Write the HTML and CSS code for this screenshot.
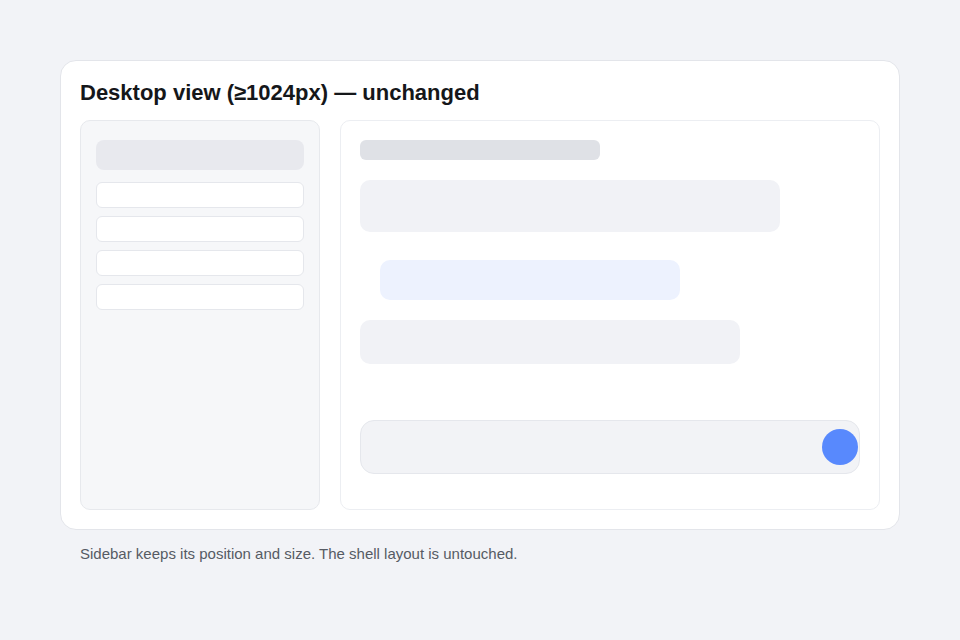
FILE: index.html
```html
<!DOCTYPE html>
<html lang="en">
<head>
<meta charset="utf-8">
<title>Desktop view</title>
<link rel="stylesheet" href="styles.css">
</head>
<body>
  <section class="panel">
    <h2 class="panel-title">Desktop view (≥1024px) — unchanged</h2>
    <div class="shell">
      <aside class="sidebar">
        <div class="sidebar-head"></div>
        <div class="sidebar-list">
          <div class="sidebar-item"></div>
          <div class="sidebar-item"></div>
          <div class="sidebar-item"></div>
          <div class="sidebar-item"></div>
        </div>
      </aside>
      <main class="chat">
        <div class="chat-title"></div>
        <div class="msg msg-in msg-wide"></div>
        <div class="msg msg-out"></div>
        <div class="msg msg-in msg-mid"></div>
        <div class="composer">
          <span class="send"></span>
        </div>
      </main>
    </div>
  </section>
  <p class="caption">Sidebar keeps its position and size. The shell layout is untouched.</p>
</body>
</html>
```

FILE: styles.css
```css
* { box-sizing: border-box; }

html, body {
  margin: 0;
  background: #f2f3f7;
}

body {
  padding: 60px;
  font-family: "Liberation Sans", Arial, sans-serif;
}

.panel {
  background: #ffffff;
  border: 1px solid #e3e5ea;
  border-radius: 16px;
  padding: 19px;
}

.panel-title {
  margin: 0 0 16px;
  font-size: 22px;
  line-height: 25px;
  font-weight: 700;
  color: #15171a;
}

.shell {
  display: flex;
  gap: 20px;
  height: 390px;
  margin-top: -1px;
}

.sidebar {
  width: 240px;
  flex: none;
  background: #f6f7f9;
  border: 1px solid #e7e9ed;
  border-radius: 10px;
  padding: 19px 15px;
  display: flex;
  flex-direction: column;
  gap: 12px;
}

.sidebar-head {
  height: 30px;
  background: #e8e9ee;
  border-radius: 8px;
}

.sidebar-list {
  display: flex;
  flex-direction: column;
  gap: 8px;
}

.sidebar-item {
  height: 26px;
  background: #ffffff;
  border: 1px solid #e5e7ec;
  border-radius: 6px;
}

.chat {
  flex: 1;
  background: #ffffff;
  border: 1px solid #eceef2;
  border-radius: 10px;
  padding: 19px;
  display: flex;
  flex-direction: column;
  align-items: flex-start;
}

.chat-title {
  width: 240px;
  height: 20px;
  background: #dfe1e6;
  border-radius: 6px;
}

.msg {
  border-radius: 10px;
}

.msg-in {
  background: #f1f2f6;
}

.msg-wide {
  width: 420px;
  height: 52px;
  margin-top: 20px;
}

.msg-out {
  width: 300px;
  height: 40px;
  margin: 28px 0 0 20px;
  background: #edf2fe;
}

.msg-mid {
  width: 380px;
  height: 44px;
  margin-top: 20px;
}

.composer {
  align-self: stretch;
  height: 54px;
  margin-top: 56px;
  background: #f2f3f6;
  border: 1px solid #e5e7ec;
  border-radius: 14px;
  display: flex;
  align-items: center;
  justify-content: flex-end;
  padding: 0 1px;
}

.send {
  width: 36px;
  height: 36px;
  border-radius: 50%;
  background: #5889fd;
}

.caption {
  margin: 14px 0 0 20px;
  font-size: 15px;
  line-height: 20px;
  color: #565b64;
}
```
